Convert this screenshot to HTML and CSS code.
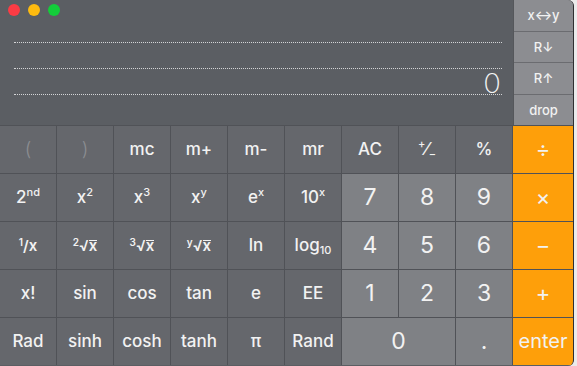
FILE: index.html
```html
<!DOCTYPE html>
<html lang="en">
<head>
    <meta charset="UTF-8">
    <meta name="viewport" content="width=device-width, initial-scale=1.0">
    <title>Calculator</title>
    <link rel="stylesheet" href="styles.css">
</head>
<body>
    <div class="window">
        <div class="top">
            <div class="display">
                <div class="titlebar">
                    <span class="light red"></span>
                    <span class="light yellow"></span>
                    <span class="light green"></span>
                </div>
                <div class="stack-row"></div>
                <div class="stack-row"></div>
                <div class="stack-row value">0</div>
            </div>
            <div class="stack-keys">
                <div class="stack-key">x↔y</div>
                <div class="stack-key">R↓</div>
                <div class="stack-key">R↑</div>
                <div class="stack-key">drop</div>
            </div>
        </div>

        <div class="keypad">
            <!-- row 1 -->
            <div class="key fn disabled">(</div>
            <div class="key fn disabled">)</div>
            <div class="key fn">mc</div>
            <div class="key fn">m+</div>
            <div class="key fn">m-</div>
            <div class="key fn">mr</div>
            <div class="key fn">AC</div>
            <div class="key fn"><sup>+</sup>⁄<sub>−</sub></div>
            <div class="key fn">%</div>
            <div class="key op">÷</div>

            <!-- row 2 -->
            <div class="key fn">2<sup>nd</sup></div>
            <div class="key fn">x<sup>2</sup></div>
            <div class="key fn">x<sup>3</sup></div>
            <div class="key fn">x<sup>y</sup></div>
            <div class="key fn">e<sup>x</sup></div>
            <div class="key fn">10<sup>x</sup></div>
            <div class="key num">7</div>
            <div class="key num">8</div>
            <div class="key num">9</div>
            <div class="key op">×</div>

            <!-- row 3 -->
            <div class="key fn small"><sup>1</sup>/x</div>
            <div class="key fn small"><sup>2</sup>√<span class="rad">x</span></div>
            <div class="key fn small"><sup>3</sup>√<span class="rad">x</span></div>
            <div class="key fn small"><sup>y</sup>√<span class="rad">x</span></div>
            <div class="key fn">ln</div>
            <div class="key fn">log<sub>10</sub></div>
            <div class="key num">4</div>
            <div class="key num">5</div>
            <div class="key num">6</div>
            <div class="key op">−</div>

            <!-- row 4 -->
            <div class="key fn">x!</div>
            <div class="key fn">sin</div>
            <div class="key fn">cos</div>
            <div class="key fn">tan</div>
            <div class="key fn">e</div>
            <div class="key fn">EE</div>
            <div class="key num">1</div>
            <div class="key num">2</div>
            <div class="key num">3</div>
            <div class="key op">+</div>

            <!-- row 5 -->
            <div class="key fn">Rad</div>
            <div class="key fn">sinh</div>
            <div class="key fn">cosh</div>
            <div class="key fn">tanh</div>
            <div class="key fn">π</div>
            <div class="key fn">Rand</div>
            <div class="key num zero">0</div>
            <div class="key num">.</div>
            <div class="key op enter">enter</div>
        </div>
    </div>
</body>
</html>
```

FILE: styles.css
```css
* {
    margin: 0;
    padding: 0;
    box-sizing: border-box;
}

body {
    background: #ebebeb;
    font-family: 'Inter', 'Liberation Sans', sans-serif;
    color: #f2f2f2;
    width: 577px;
    height: 366px;
    overflow: hidden;
}

.window {
    width: 574px;
    height: 366px;
    background: #5b5e63;
    border-right: 1px solid #2e2f31;
    border-radius: 0 6px 6px 0;
    overflow: hidden;
}

/* Display + RPN stack keys */
.top {
    display: flex;
    height: 125px;
}

.display {
    flex: 1;
    padding: 0 11px 0 14px;
}

.titlebar {
    display: flex;
    gap: 8px;
    height: 17px;
    padding-top: 4px;
    margin-left: -6px;
}

.light {
    width: 12px;
    height: 12px;
    border-radius: 50%;
}

.red { background: #fc3b44; }
.yellow { background: #fdbb10; }
.green { background: #13cd3a; }

.stack-row {
    height: 26px;
    border-bottom: 1px dotted #d4d5d7;
}

.value {
    text-align: right;
    font-family: 'Lato', 'Open Sans', sans-serif;
    font-weight: 300;
    font-size: 27px;
    line-height: 28px;
    padding-right: 2px;
    color: #f4f4f4;
}

.stack-keys {
    width: 60px;
    display: flex;
    flex-direction: column;
    gap: 1px;
    background: #6b6c70;
    border-left: 1px solid #55575b;
}

.stack-key {
    flex: 1;
    display: flex;
    align-items: center;
    justify-content: center;
    background: #8c8d91;
    font-size: 13px;
    font-weight: 500;
}

/* Keypad */
.keypad {
    display: grid;
    grid-template-columns: repeat(9, 56px) 1fr;
    grid-template-rows: repeat(5, 47px);
    gap: 1px;
    padding-top: 1px;
    background: #505257;
}

.key {
    text-align: center;
    line-height: 47px;
    font-size: 17px;
    font-weight: 500;
    white-space: nowrap;
}

.key sup {
    font-size: 11px;
    line-height: 0;
    vertical-align: 7px;
}

.key sub {
    font-size: 11px;
    line-height: 0;
    vertical-align: -3px;
}

.fn {
    background: #65676c;
}

.fn.small {
    font-size: 15px;
    font-weight: 600;
}

.fn.small sup {
    font-size: 10px;
    vertical-align: 5px;
}

.rad {
    display: inline-block;
    line-height: 10px;
    border-top: 1px solid #f2f2f2;
}

.disabled {
    color: #8b8d91;
    font-size: 19px;
    font-weight: 300;
}

.num {
    background: #7f8185;
    font-size: 23px;
    font-weight: 400;
}

.zero {
    grid-column: span 2;
}

.op {
    background: #fe9f0a;
    font-size: 22px;
    font-weight: 400;
}

.enter {
    font-size: 20px;
}
```
